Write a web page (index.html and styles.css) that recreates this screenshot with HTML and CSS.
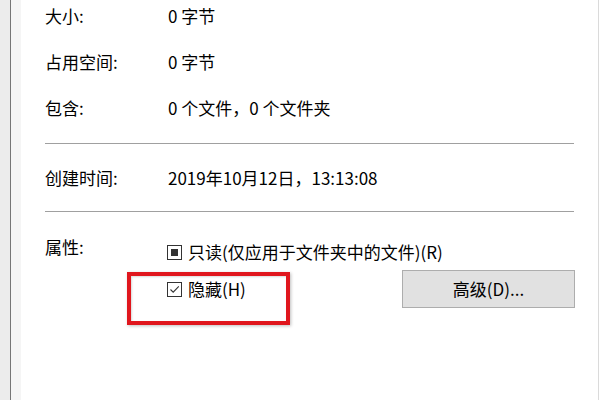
FILE: index.html
```html
<!DOCTYPE html>
<html lang="zh-CN">
<head>
<meta charset="utf-8">
<link rel="stylesheet" href="styles.css">
</head>
<body>
<div class="dialog">
  <div class="outer"></div>
  <div class="edge"></div>
  <div class="inner"></div>
  <div class="panel">
    <div class="rows">
      <div class="row"><span class="label">大小:</span><span class="value">0 字节</span></div>
      <div class="row"><span class="label">占用空间:</span><span class="value">0 字节</span></div>
      <div class="row"><span class="label">包含:</span><span class="value">0 个文件，0 个文件夹</span></div>
    </div>
    <div class="sep sep1"></div>
    <div class="row"><span class="label">创建时间:</span><span class="value">2019年10月12日，13:13:08</span></div>
    <div class="sep sep2"></div>
    <div class="attrs">
      <span class="label">属性:</span>
      <div class="attr-body">
        <div class="check-row">
          <span class="box box-mixed"><span class="mixed"></span></span>
          <span class="check-text">只读(仅应用于文件夹中的文件)(R)</span>
        </div>
        <div class="check-row second">
          <span class="box">
            <svg width="13" height="13" viewBox="0 0 13 13"><path d="M2.5 6.5 L5.2 9.2 L10.8 3.4" fill="none" stroke="#333" stroke-width="1.1"/></svg>
          </span>
          <span class="check-text">隐藏(H)</span>
          <button class="btn">高级(D)...</button>
        </div>
      </div>
    </div>
  </div>
  <div class="rborder"></div>
  <div class="rwhite"></div>
</div>
<div class="highlight"></div>
</body>
</html>
```
FILE: styles.css
```css
html, body {
  margin: 0;
  padding: 0;
}
body {
  width: 600px;
  height: 400px;
  overflow: hidden;
  position: relative;
  background: #ffffff;
  font-family: "Noto Sans CJK SC", "Noto Sans", sans-serif;
  font-size: 17px;
  color: #000;
}
.dialog {
  display: flex;
  height: 400px;
}
.outer {
  width: 10px;
  background: #ececec;
}
.edge {
  width: 1px;
  background: #767676;
}
.inner {
  width: 10px;
  background: #f5f5f5;
}
.panel {
  flex: 1;
  background: #fff;
  padding: 6px 24px 0 24px;
}
.rborder {
  width: 1px;
  background: #dadada;
}
.rwhite {
  width: 1px;
  background: #fff;
}
.rows {
  display: flex;
  flex-direction: column;
  gap: 26px;
}
.row {
  display: grid;
  grid-template-columns: 123px 1fr;
  line-height: 20px;
  height: 20px;
}
.label, .value {
  white-space: nowrap;
}
.sep {
  height: 1px;
  background: #a0a0a0;
}
.sep1 {
  margin: 25px 0 24px;
}
.sep2 {
  margin: 23px 0 25px;
}
.attrs {
  display: grid;
  grid-template-columns: 123px 1fr;
  line-height: 20px;
}
.attr-body {
  padding-top: 5px;
  display: flex;
  flex-direction: column;
  gap: 8px;
}
.check-row {
  display: flex;
  align-items: center;
  height: 20px;
}
.check-row.second {
  height: 38px;
}
.box {
  width: 15px;
  height: 15px;
  box-sizing: border-box;
  border: 1px solid #333;
  display: flex;
  align-items: center;
  justify-content: center;
  flex: none;
  margin-left: -1px;
}
.mixed {
  width: 7px;
  height: 7px;
  background: #333;
}
.check-text {
  margin-left: 6px;
  white-space: nowrap;
}
.btn {
  margin-left: auto;
  margin-right: -1px;
  width: 173px;
  height: 38px;
  background: #e1e1e1;
  border: 1px solid #adadad;
  font-family: "Noto Sans CJK SC", "Noto Sans", sans-serif;
  font-size: 17px;
  color: #000;
  padding: 0;
  line-height: 20px;
}
.highlight {
  position: absolute;
  left: 127px;
  top: 272px;
  width: 163px;
  height: 53px;
  box-sizing: border-box;
  border: 4px solid #e0161d;
  box-shadow: 1px 1px 3px rgba(0,0,0,0.25), inset 1px 1px 2px rgba(0,0,0,0.15);
}
```
